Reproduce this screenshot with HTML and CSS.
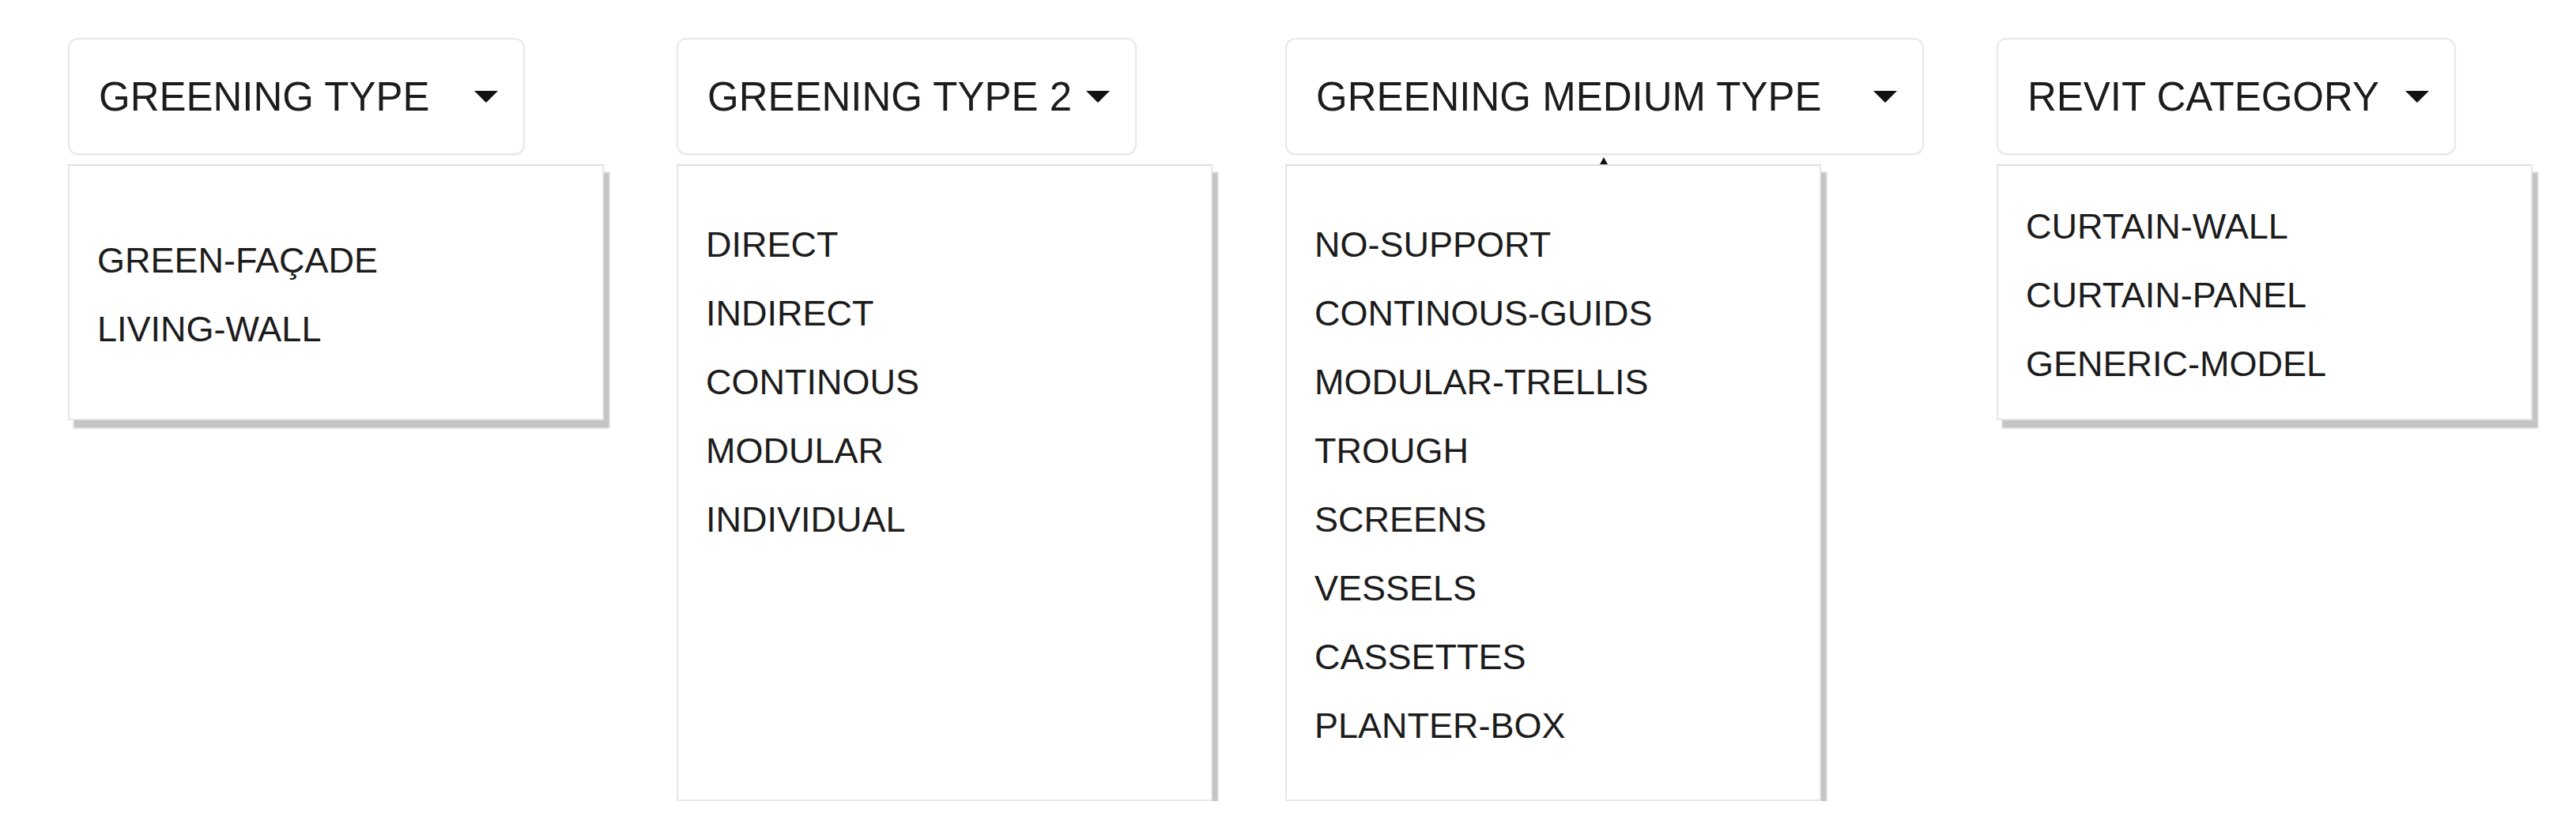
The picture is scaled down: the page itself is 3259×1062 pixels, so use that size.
FILE: index.html
```html
<!DOCTYPE html>
<html lang="en">
<head>
<meta charset="utf-8">
<title>Greening filters</title>
<link rel="stylesheet" href="styles.css">
</head>
<body>
<div class="filters">
  <div class="filter">
    <button class="select select--w1" type="button"><span class="select__label">GREENING TYPE</span><span class="caret-down"></span></button>
    <ul class="menu menu--short">
      <li class="menu__item">GREEN-FAÇADE</li>
      <li class="menu__item">LIVING-WALL</li>
    </ul>
  </div>
  <div class="filter">
    <button class="select select--w2" type="button"><span class="select__label">GREENING TYPE 2</span><span class="caret-down"></span></button>
    <ul class="menu menu--tall menu--top">
      <li class="menu__item">DIRECT</li>
      <li class="menu__item">INDIRECT</li>
      <li class="menu__item">CONTINOUS</li>
      <li class="menu__item">MODULAR</li>
      <li class="menu__item">INDIVIDUAL</li>
    </ul>
  </div>
  <div class="filter">
    <button class="select select--w3" type="button"><span class="select__label">GREENING MEDIUM TYPE</span><span class="caret-down"></span></button>
    <span class="pointer"></span>
    <ul class="menu menu--tall">
      <li class="menu__item">NO-SUPPORT</li>
      <li class="menu__item">CONTINOUS-GUIDS</li>
      <li class="menu__item">MODULAR-TRELLIS</li>
      <li class="menu__item">TROUGH</li>
      <li class="menu__item">SCREENS</li>
      <li class="menu__item">VESSELS</li>
      <li class="menu__item">CASSETTES</li>
      <li class="menu__item">PLANTER-BOX</li>
    </ul>
  </div>
  <div class="filter">
    <button class="select select--w4" type="button"><span class="select__label">REVIT CATEGORY</span><span class="caret-down"></span></button>
    <ul class="menu menu--short">
      <li class="menu__item">CURTAIN-WALL</li>
      <li class="menu__item">CURTAIN-PANEL</li>
      <li class="menu__item">GENERIC-MODEL</li>
    </ul>
  </div>
</div>
</body>
</html>
```

FILE: styles.css
```css
html, body {
  margin: 0;
  padding: 0;
  background: #ffffff;
}

body {
  font-family: "Liberation Sans", Arial, sans-serif;
  color: #1c1c1c;
}

.filters {
  display: flex;
  align-items: flex-start;
  gap: 92px;
  padding: 48px 0 0 86px;
}

.filter {
  position: relative;
  display: flex;
  flex-direction: column;
  align-items: flex-start;
}

.select {
  display: flex;
  align-items: center;
  justify-content: space-between;
  height: 148px;
  padding: 0 32px 0 37px;
  box-sizing: border-box;
  background: #ffffff;
  border: 2px solid #e8e8e8;
  border-radius: 13px;
  box-shadow: 0 1px 2px rgba(0, 0, 0, 0.06);
  font-family: inherit;
  font-size: 51px;
  color: #1c1c1c;
  cursor: pointer;
}

.select--w1 { width: 578px; }
.select--w2 { width: 582px; }
.select--w3 { width: 808px; }
.select--w4 { width: 581px; }

.select__label {
  white-space: nowrap;
}

.caret-down {
  flex: none;
  width: 0;
  height: 0;
  border-left: 15px solid transparent;
  border-right: 15px solid transparent;
  border-top: 15px solid #111111;
}

.pointer {
  position: absolute;
  left: 398px;
  top: 151px;
  width: 0;
  height: 0;
  border-left: 5px solid transparent;
  border-right: 5px solid transparent;
  border-bottom: 9px solid #111111;
}

.menu {
  list-style: none;
  margin: 12px 0 0 0;
  padding: 6px 0 0 35px;
  box-sizing: border-box;
  width: 678px;
  display: flex;
  flex-direction: column;
  justify-content: center;
  background: #ffffff;
  border: 2px solid #e6e6e6;
  border-top-color: #dddddd;
  box-shadow: 7px 10px 2px #c4c4c4;
}

.menu--short { height: 324px; }
.menu--tall { height: 806px; }

.menu--top {
  justify-content: flex-start;
  padding-top: 56px;
}

.menu__item {
  font-size: 45px;
  line-height: 87px;
  height: 87px;
  white-space: nowrap;
  color: #1c1c1c;
}
```
